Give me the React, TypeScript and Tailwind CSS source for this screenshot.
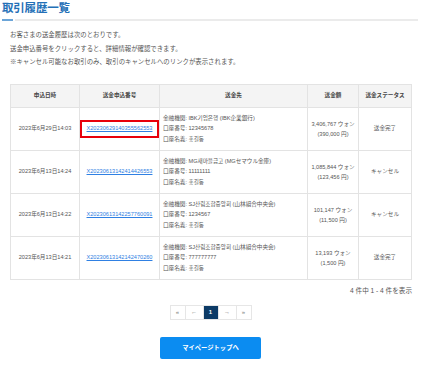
import React from "react";

interface HistoryRow {
  date: string;
  no: string;
  bank: string;
  account: string;
  holder: string;
  won: string;
  yen: string;
  status: string;
}

const rows: HistoryRow[] = [
  {
    date: "2023年6月29日14:03",
    no: "X20230629140355562553",
    bank: "IBK기업은행 (IBK企業銀行)",
    account: "12345678",
    holder: "홍길동",
    won: "3,406,767 ウォン",
    yen: "(390,000 円)",
    status: "送金完了",
  },
  {
    date: "2023年6月13日14:24",
    no: "X20230613142414426553",
    bank: "MG새마을금고 (MGセマウル金庫)",
    account: "11111111",
    holder: "홍길동",
    won: "1,085,844 ウォン",
    yen: "(123,456 円)",
    status: "キャンセル",
  },
  {
    date: "2023年6月13日14:22",
    no: "X20230613142257760091",
    bank: "SJ산림조합중앙회 (山林組合中央会)",
    account: "1234567",
    holder: "홍길동",
    won: "101,147 ウォン",
    yen: "(11,500 円)",
    status: "キャンセル",
  },
  {
    date: "2023年6月13日14:21",
    no: "X20230613142142470260",
    bank: "SJ산림조합중앙회 (山林組合中央会)",
    account: "777777777",
    holder: "홍길동",
    won: "13,193 ウォン",
    yen: "(1,500 円)",
    status: "送金完了",
  },
];

// table cell styles
const thStyle = `border border-[#e3e3e3] bg-[#f4f4f4] font-bold text-[5.6px] text-[#444] text-center`;
const tdStyle = `border border-[#e3e3e3] text-[5.6px] text-[#555] text-center`;

// pagination cell
const pageStyle = `h-[15px] flex items-center justify-center border border-[#e6e6e6] text-[6px] text-[#777] -ml-px first:ml-0`;

export default function App() {
  return (
    <div className="w-[421px] h-[381px] overflow-hidden bg-white text-[#555] font-['Liberation_Sans','Noto_Sans_CJK_JP',sans-serif]">
      {/* title */}
      <div className="pl-[2px] pr-[3px] pt-[1px]">
        <h1 className="text-[11.5px] leading-[15px] font-bold text-[#2470b7] tracking-[-0.2px]">
          取引履歴一覧
        </h1>
        <div className="mt-[3px] flex gap-[2px]">
          <div className="w-[11px] h-[2px] bg-[#6ba5d8]" />
          <div className="flex-1 h-[2px] bg-[#ebebeb]" />
        </div>
      </div>

      {/* intro */}
      <div className="mt-[7px] px-[10px] text-[6.4px] leading-[13.5px] text-[#555]">
        <p>お客さまの送金履歴は次のとおりです。</p>
        <p>送金申込番号をクリックすると、詳細情報が確認できます。</p>
        <p>※キャンセル可能なお取引のみ、取引のキャンセルへのリンクが表示されます。</p>
      </div>

      {/* table */}
      <div className="mt-[15px] px-[10px]">
        <table className="w-[401px] table-fixed border-collapse">
          <colgroup>
            <col className="w-[69px]" />
            <col className="w-[80px]" />
            <col className="w-[148px]" />
            <col className="w-[51px]" />
            <col className="w-[53px]" />
          </colgroup>
          <thead>
            <tr className="h-[23px]">
              <th className={thStyle}>申込日時</th>
              <th className={thStyle}>送金申込番号</th>
              <th className={thStyle}>送金先</th>
              <th className={thStyle}>送金額</th>
              <th className={thStyle}>送金ステータス</th>
            </tr>
          </thead>
          <tbody>
            {rows.map((row, i) => (
              <tr key={row.no} className="h-[43px]">
                <td className={tdStyle}>{row.date}</td>
                <td className={tdStyle}>
                  {i === 0 ? (
                    <div className="h-[18px] border-2 border-[#e8000b] flex items-center justify-center">
                      <a className="text-[#2f80e3] underline">{row.no}</a>
                    </div>
                  ) : (
                    <a className="text-[#2f80e3] underline">{row.no}</a>
                  )}
                </td>
                <td className={`${tdStyle} text-left pl-[3px] leading-[10.6px]`}>
                  <div>金融機関: {row.bank}</div>
                  <div>口座番号: {row.account}</div>
                  <div>口座名義: {row.holder}</div>
                </td>
                <td className={`${tdStyle} leading-[10px]`}>
                  <div>{row.won}</div>
                  <div>{row.yen}</div>
                </td>
                <td className={tdStyle}>{row.status}</td>
              </tr>
            ))}
          </tbody>
        </table>
      </div>

      {/* count */}
      <div className="mt-[6px] pr-[9px] text-right text-[6.6px] leading-[10px] text-[#555]">
        4 件中 1 - 4 件を表示
      </div>

      {/* pagination */}
      <div className="mt-[9px] flex justify-center">
        <div className="flex">
          <div className={`${pageStyle} w-[16px]`}>«</div>
          <div className={`${pageStyle} w-[19px]`}>←</div>
          <div className={`${pageStyle} w-[16px] bg-[#0c3a66] border-[#0c3a66] text-white font-bold`}>1</div>
          <div className={`${pageStyle} w-[19px]`}>→</div>
          <div className={`${pageStyle} w-[16px]`}>»</div>
        </div>
      </div>

      {/* back button */}
      <div className="mt-[17px] flex justify-center">
        <button className="w-[101px] h-[22px] rounded-[2px] bg-[#0b8cf1] text-white text-[6.3px] font-bold">
          マイページトップへ
        </button>
      </div>
    </div>
  );
}
